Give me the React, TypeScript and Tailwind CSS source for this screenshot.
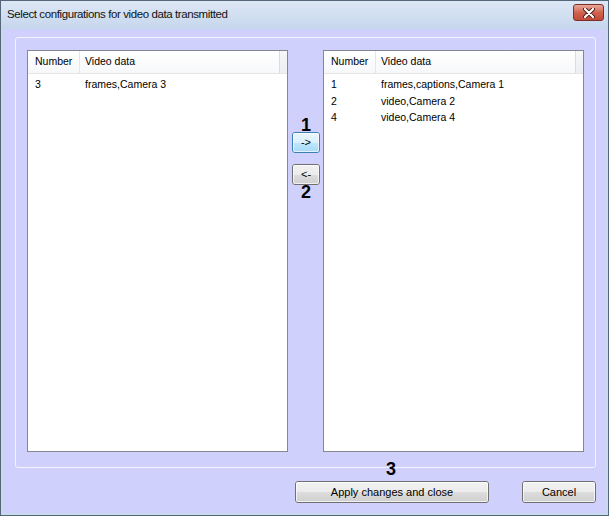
const FONT = { fontFamily: '"Liberation Sans", Arial, sans-serif' };

type Row = { num: string; data: string };

const leftRows: Row[] = [{ num: "3", data: "frames,Camera 3" }];
const rightRows: Row[] = [
  { num: "1", data: "frames,captions,Camera 1" },
  { num: "2", data: "video,Camera 2" },
  { num: "4", data: "video,Camera 4" },
];

function ListView({ rows }: { rows: Row[] }) {
  return (
    <div className="w-[261px] h-[402px] bg-white border border-[#828790] flex flex-col text-[10.5px]">
      {/* header */}
      <div className="flex h-[23px] border-b border-[#e5e5e5] bg-gradient-to-b from-white to-[#f7f8fa]">
        <div className="w-[52px] pl-[7px] flex items-center border-r border-[#e3e6ea]">Number</div>
        <div className="w-[200px] pl-[5px] flex items-center border-r border-[#d9dce0]">Video data</div>
        <div className="flex-1 bg-gradient-to-b from-[#f6f7f9] to-[#eceef1]" />
      </div>
      <div className="flex flex-col pt-[3px]">
        {rows.map((r) => (
          <div key={r.num} className="flex h-[16.5px] items-center">
            <div className="w-[53px] pl-[7px]">{r.num}</div>
            <div className="pl-[4px]">{r.data}</div>
          </div>
        ))}
      </div>
    </div>
  );
}

function Btn({ children, active, className }: { children: React.ReactNode; active?: boolean; className?: string }) {
  return (
    <div
      className={
        "relative flex items-center justify-center rounded-[3px] border overflow-hidden " +
        (active ? "border-[#3c7fb1] " : "border-[#707070] ") +
        (className ?? "")
      }
    >
      <div className="absolute inset-0 flex flex-col">
        {active ? (
          <>
            <div className="flex-1 bg-gradient-to-b from-[#eaf6fd] to-[#d9f0fc]" />
            <div className="flex-1 bg-gradient-to-b from-[#bee6fd] to-[#a7d9f5]" />
          </>
        ) : (
          <>
            <div className="flex-1 bg-gradient-to-b from-[#f2f2f2] to-[#ebebeb]" />
            <div className="flex-1 bg-gradient-to-b from-[#dddddd] to-[#cfcfcf]" />
          </>
        )}
      </div>
      <div className="absolute inset-0 rounded-[2px] border border-white/70" />
      <span className="relative">{children}</span>
    </div>
  );
}

export default function App() {
  return (
    <div
      className="w-[609px] h-[516px] bg-[#c9d9ee] border border-[#55667a] flex flex-col text-[11px] text-black"
      style={FONT}
    >
      {/* title bar */}
      <div className="h-[28px] flex items-center justify-between pl-[6px] pr-[4px] bg-gradient-to-b from-[#dde8f6] to-[#c6d6ec]">
        <span className="text-[11.5px] tracking-[-0.4px] text-[#111]">Select configurations for video data transmitted</span>
        <div className="w-[31px] h-[17px] -mt-[5px] rounded-[3px] border border-[#7a2f2a] bg-gradient-to-b from-[#e9a99c] via-[#d0624f] to-[#c24a38] flex items-center justify-center">
          <svg width="12" height="10" viewBox="0 0 12 10">
            <path d="M2 1 L10 9 M10 1 L2 9" stroke="#4a1a16" strokeWidth="4" strokeLinecap="round" />
            <path d="M2 1 L10 9 M10 1 L2 9" stroke="#ffffff" strokeWidth="2.2" strokeLinecap="round" />
          </svg>
        </div>
      </div>

      {/* client area */}
      <div className="relative flex-1 mx-[2px] mb-[2px] bg-[#d0d0fc] pl-[12px] pr-[9px] pt-[8px] flex flex-col">
        {/* group box */}
        <div className="w-[581px] h-[431px] rounded-[3px] border border-[#f4f4ff] pl-[11px] pt-[12px] flex">
          <ListView rows={leftRows} />
          <div className="w-[35px] flex flex-col items-center pt-[66px] pl-[1px]">
            <div className="h-[16px] text-[18px] leading-[18px] font-bold">1</div>
            <Btn active className="w-[28px] h-[21px]">-&gt;</Btn>
            <Btn className="w-[28px] h-[21px] mt-[11px]">&lt;-</Btn>
            <div className="-mt-[2px] h-[16px] text-[18px] leading-[18px] font-bold">2</div>
          </div>
          <ListView rows={rightRows} />
        </div>

        {/* buttons */}
        <div className="flex mt-[13px] h-[22px]">
          <Btn className="ml-[280px] w-[194px] h-[22px]">Apply changes and close</Btn>
          <Btn className="ml-[33px] w-[74px] h-[22px]">Cancel</Btn>
        </div>

        {/* annotation 3 */}
        <div className="absolute left-[383px] top-[431px] text-[18px] leading-[18px] font-bold">3</div>
      </div>
    </div>
  );
}
